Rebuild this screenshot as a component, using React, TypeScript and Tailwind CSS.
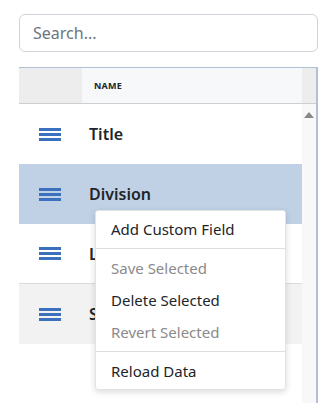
import React from "react";

function Hamburger() {
  return (
    <div className="flex w-[22px] flex-col gap-[2px]">
      <span className="h-[3px] bg-[#3a70bd]" />
      <span className="h-[3px] bg-[#3a70bd]" />
      <span className="h-[3px] bg-[#3a70bd]" />
    </div>
  );
}

const rows = [
  { name: "Title", bg: "bg-white" },
  { name: "Division", bg: "bg-[#c0d1e6]" },
  { name: "Location", bg: "bg-white border-b border-[#dcdcdc]" },
  { name: "Status", bg: "bg-[#f2f2f2]" },
];

const menu: ({ label: string; disabled?: boolean } | "sep")[] = [
  { label: "Add Custom Field" },
  "sep",
  { label: "Save Selected", disabled: true },
  { label: "Delete Selected" },
  { label: "Revert Selected", disabled: true },
  "sep",
  { label: "Reload Data" },
];

export default function App() {
  return (
    <div
      className="relative h-[403px] overflow-hidden bg-white pl-[19px] pr-[1px] pt-[14px] text-[#212529]"
      style={{ fontFamily: '"Noto Sans", "Open Sans", sans-serif' }}
    >
      <div className="flex h-[38px] items-center rounded-[6px] border border-[#ced4da] px-[13px] text-[16px] text-[#6c757d]">
        Search...
      </div>

      {/* grid */}
      <div className="mt-[15px] flex h-[400px] border-t border-r-2 border-[#aebfd6]">
        <div className="flex flex-1 flex-col">
          <div className="flex h-[36px] border-b border-[#cfcfcf]">
            <div className="w-[63px] bg-[#ededed]" />
            <div className="flex flex-1 items-center bg-[#f7f8fa] pl-[12px] text-[9px] font-bold tracking-[0.2px]">
              NAME
            </div>
          </div>
          {rows.map((r) => (
            <div key={r.name} className={`flex h-[60px] items-center ${r.bg}`}>
              <div className="w-[70px] pl-[20px]">
                <Hamburger />
              </div>
              <span className="text-[16px] font-semibold">{r.name}</span>
            </div>
          ))}
        </div>
        <div className="flex w-[14px] flex-col bg-[#f8f8f8]">
          <div className="h-[36px] border-b border-[#cfcfcf] bg-[#ededed]" />
          <div className="flex justify-center pt-[8px]">
            <div className="h-0 w-0 border-x-[5px] border-b-[6px] border-x-transparent border-b-[#888]" />
          </div>
        </div>
      </div>

      {/* context menu */}
      <div className="absolute left-[95px] top-[210px] w-[191px] rounded-[3px] border border-[#e3e3e3] bg-white py-[2px] shadow-[0_2px_6px_rgba(0,0,0,0.15)]">
        {menu.map((m, i) =>
          m === "sep" ? (
            <div key={i} className="my-[3px] h-px bg-[#dedede]" />
          ) : (
            <div
              key={i}
              className={`flex h-[32px] items-center pl-[15px] text-[15px] ${m.disabled ? "text-[#8a8a8a]" : "text-[#212529]"}`}
            >
              {m.label}
            </div>
          )
        )}
      </div>
    </div>
  );
}
